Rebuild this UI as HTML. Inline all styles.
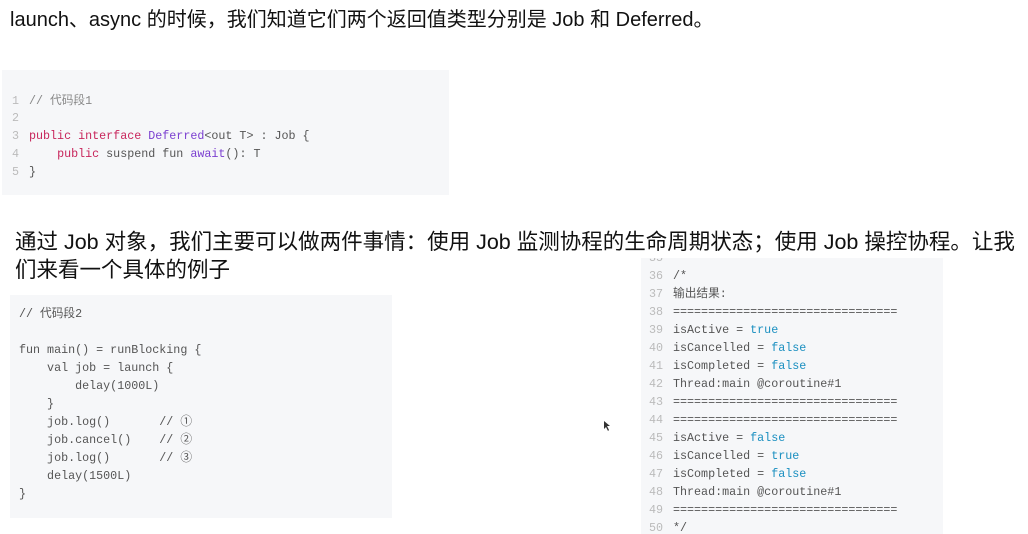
<!DOCTYPE html>
<html><head><meta charset="utf-8"><style>
body{margin:0;width:1028px;height:534px;background:#fff;position:relative;overflow:hidden;font-family:"Liberation Sans","Noto Sans CJK SC",sans-serif;color:#111}
.t{position:absolute;font-size:20px;white-space:nowrap;line-height:28px}
.box{position:absolute;background:#f6f7f9;overflow:hidden}
.l{position:absolute;font-family:"Liberation Mono","Noto Sans CJK SC",monospace;font-size:11.7px;white-space:pre;color:#555;line-height:18px}
.n{color:#bbb}
.k{color:#c8265c}.f{color:#7b3fd0}.b{color:#1a8fc0}
</style></head><body>
<div class="t" style="left:10px;top:6px">launch、async 的时候，我们知道它们两个返回值类型分别是 Job 和 Deferred。</div>
<div class="box" style="left:2px;top:70px;width:447px;height:125px"></div>
<div class="l n" style="left:12px;top:92px">1</div><div class="l" style="left:29px;top:92px;color:#888">// 代码段1</div>
<div class="l n" style="left:12px;top:109px">2</div>
<div class="l n" style="left:12px;top:127px">3</div><div class="l" style="left:29px;top:127px"><span class="k">public</span> <span class="k">interface</span> <span class="f">Deferred</span>&lt;out T&gt; : Job {</div>
<div class="l n" style="left:12px;top:145px">4</div><div class="l" style="left:29px;top:145px">    <span class="k">public</span> suspend fun <span class="f">await</span>(): T</div>
<div class="l n" style="left:12px;top:163px">5</div><div class="l" style="left:29px;top:163px">}</div>

<div class="t" style="left:15px;top:228px;font-size:21.5px">通过 Job 对象，我们主要可以做两件事情：使用 Job 监测协程的生命周期状态；使用 Job 操控协程。让我</div>
<div class="t" style="left:15px;top:256px;font-size:21.5px">们来看一个具体的例子</div>

<div class="box" style="left:10px;top:295px;width:382px;height:223px"></div>
<div class="l" style="left:19px;top:305px">// 代码段2

fun main() = runBlocking {
    val job = launch {
        delay(1000L)
    }
    job.log()       // ①
    job.cancel()    // ②
    job.log()       // ③
    delay(1500L)
}</div>

<div class="box" style="left:641px;top:258px;width:302px;height:276px">
<div class="l n" style="left:8px;top:-9px">35
36
37
38
39
40
41
42
43
44
45
46
47
48
49
50</div>
<div class="l" style="left:32px;top:9px">/*
输出结果:
================================
isActive = <span class="b">true</span>
isCancelled = <span class="b">false</span>
isCompleted = <span class="b">false</span>
Thread:main @coroutine#1
================================
================================
isActive = <span class="b">false</span>
isCancelled = <span class="b">true</span>
isCompleted = <span class="b">false</span>
Thread:main @coroutine#1
================================
*/</div>
</div>
<svg style="position:absolute;left:603px;top:420px" width="8" height="12"><path d="M1 1L1 9L3 7L5 11L6 10L4 6L7 6Z" fill="#333"/></svg>
</body></html>
